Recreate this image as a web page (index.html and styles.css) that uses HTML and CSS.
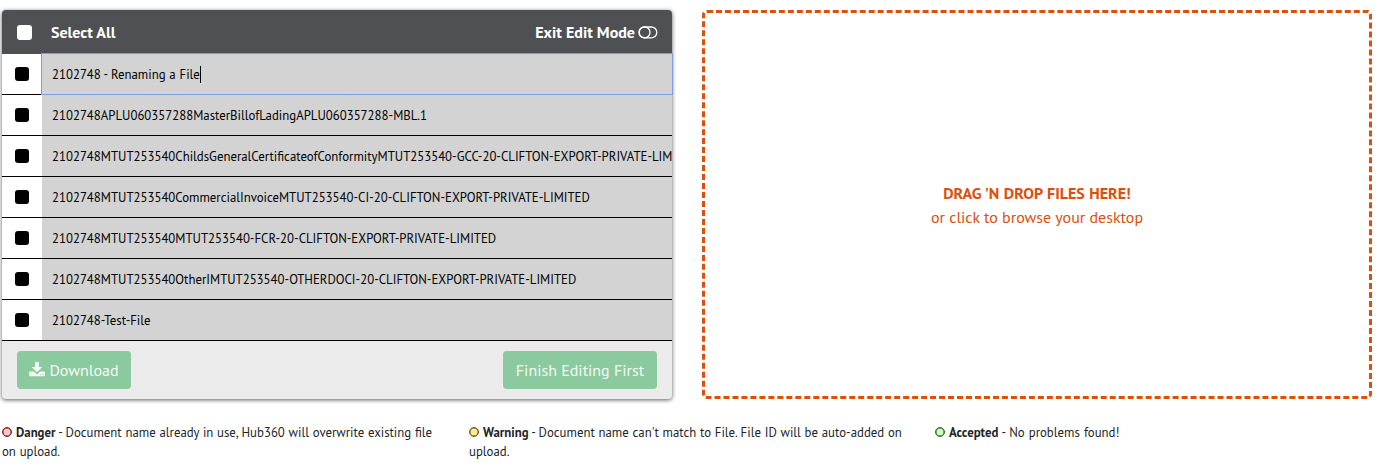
FILE: index.html
```html
<!DOCTYPE html>
<html lang="en">
<head>
<meta charset="utf-8">
<title>Files</title>
<link rel="stylesheet" href="styles.css">
</head>
<body>
<main class="panels">
  <section class="card">
    <header class="card-head">
      <span class="check check-all"></span>
      <span class="select-all">Select All</span>
      <span class="exit">Exit Edit Mode</span>
      <svg class="toggle" width="20" height="13" viewBox="0 0 20 13" fill="none" stroke="#fff" stroke-width="1.3"><rect x="1" y="1" width="17.8" height="10.8" rx="5.4"/><circle cx="6.6" cy="6.4" r="5.4"/></svg>
    </header>
    <ul class="files">
      <li class="file editing"><span class="pick"><i class="check"></i></span><span class="name"><span class="renaming">2102748 - Renaming a File</span><i class="caret"></i></span></li>
      <li class="file"><span class="pick"><i class="check"></i></span><span class="name">2102748APLU060357288MasterBillofLadingAPLU060357288-MBL.1</span></li>
      <li class="file"><span class="pick"><i class="check"></i></span><span class="name">2102748MTUT253540ChildsGeneralCertificateofConformityMTUT253540-GCC-20-CLIFTON-EXPORT-PRIVATE-LIM</span></li>
      <li class="file"><span class="pick"><i class="check"></i></span><span class="name">2102748MTUT253540CommercialInvoiceMTUT253540-CI-20-CLIFTON-EXPORT-PRIVATE-LIMITED</span></li>
      <li class="file"><span class="pick"><i class="check"></i></span><span class="name">2102748MTUT253540MTUT253540-FCR-20-CLIFTON-EXPORT-PRIVATE-LIMITED</span></li>
      <li class="file"><span class="pick"><i class="check"></i></span><span class="name">2102748MTUT253540OtherIMTUT253540-OTHERDOCI-20-CLIFTON-EXPORT-PRIVATE-LIMITED</span></li>
      <li class="file"><span class="pick"><i class="check"></i></span><span class="name">2102748-Test-File</span></li>
    </ul>
    <footer class="card-foot">
      <span class="btn download"><svg width="16" height="15" viewBox="0 0 16 15" fill="#f4faf6"><path d="M6 0h4v5h3.4L8 10.2 2.6 5H6z"/><path d="M.8 9.5h4L8 12.4l3.2-2.9h4q.8 0 .8.8v3.2q0 .8-.8.8H.8q-.8 0-.8-.8v-3.2q0-.8.8-.8z"/><path d="M11.4 12.2h1v1h-1zM13.6 12.2h1v1h-1z" fill="#8bc99e"/></svg><span>Download</span></span>
      <span class="btn finish"><span>Finish Editing First</span></span>
    </footer>
  </section>
  <section class="drop">
    <strong class="drop-title">DRAG 'N DROP FILES HERE!</strong>
    <span class="drop-sub">or click to browse your desktop</span>
  </section>
</main>
<div class="legend">
  <p class="danger"><i class="dot"></i><b>Danger</b><span> - Document name already in use, Hub360 will overwrite existing file</span><br><span>on upload.</span></p>
  <p class="warning"><i class="dot"></i><b>Warning</b><span> - Document name can't match to File. File ID will be auto-added on</span><br><span>upload.</span></p>
  <p class="accepted"><i class="dot"></i><b>Accepted</b><span> - No problems found!</span></p>
</div>
</body>
</html>
```
FILE: styles.css
```css
* { box-sizing: border-box; }
body { margin: 0; background: #fff; color: #212529; font: 12.8px/19.2px "PT Sans", "Noto Sans", sans-serif; }
.panels { display: flex; gap: 30px; padding: 10px 5px 0 2px; }
.card { width: 670px; height: 389px; border-radius: 4px; background: #ebebeb; box-shadow: 0 1px 4px rgba(0,0,0,.65); }
.card-head { display: flex; align-items: center; height: 44px; padding: 0 14px 0 15px; background: #4f5053; color: #fff; border-radius: 4px 4px 0 0; font-size: 16px; font-weight: 700; white-space: nowrap; }
.check { display: block; width: 14px; height: 14px; border-radius: 3px; background: #000; }
.check-all { background: #fff; width: 15px; height: 15px; margin-left: 0; margin-right: 19px; }
.exit { margin-left: auto; margin-right: 3px; }
.select-all, .exit { padding-top: 2px; }
.files { list-style: none; margin: 0; padding: 0; }
.file { display: flex; height: 41px; border-bottom: 1px solid #000; }
.pick { width: 40px; padding: 13px; background: #fff; }
.name { flex: 1; min-width: 0; display: flex; align-items: center; padding: 1px 0 0 10px; background: #d3d3d3; color: #000; overflow: hidden; white-space: nowrap; }
.editing .name { outline: 1px solid #7b9de8; outline-offset: 0; }
.renaming { word-spacing: .4px; }
.caret { width: 1px; height: 17px; background: #000; }
.card-foot { display: flex; justify-content: space-between; padding: 10px 15px; }
.btn { display: flex; align-items: center; justify-content: center; gap: 4px; height: 38px; border-radius: 4px; background: #8bc99e; color: #f4faf6; font-size: 16px; white-space: nowrap; }
.btn span { padding-top: 2px; }
.download { width: 114px; }
.download svg { margin-top: -2px; }
.finish { width: 154px; }
.drop { width: 670px; height: 389px; border: 3px dashed #e04e0a; border-radius: 5px; display: flex; flex-direction: column; align-items: center; justify-content: center; color: #e04e0a; font-size: 16px; line-height: 24px; white-space: nowrap; }
.drop-title { word-spacing: .5px; }
.legend { display: grid; grid-template-columns: 467px 466px 1fr; padding: 24px 0 0 2px; white-space: nowrap; }
.legend p { margin: 0; }
.dot { display: inline-block; width: 10px; height: 10px; margin-right: 4px; border: 1px solid; border-radius: 50%; box-shadow: inset 0 0 0 .5px; }
.danger .dot { color: #8b1a1a; background: #ffc8c8; }
.warning .dot { color: #6b5a12; background: #fdeb9c; }
.accepted .dot { color: #2c6b1f; background: #c8fcc0; }
.legend span { white-space: pre; word-spacing: .35px; }
.accepted span { word-spacing: .7px; }
```
